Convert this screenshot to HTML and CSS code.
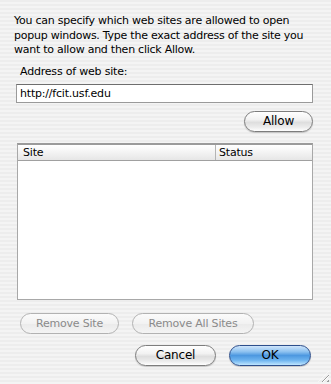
FILE: index.html
```html
<!DOCTYPE html>
<html lang="en">
<head>
    <meta charset="UTF-8">
    <title>Popup Windows</title>
    <link rel="stylesheet" href="styles.css">
</head>
<body>
    <div class="dialog">
        <p class="intro">You can specify which web sites are allowed to open popup windows. Type the exact address of the site you want to allow and then click Allow.</p>

        <label class="field-label" for="address">Address of web site:</label>
        <input class="address" type="text" id="address" value="http://fcit.usf.edu">

        <div class="row row-end">
            <button class="aqua allow">Allow</button>
        </div>

        <div class="site-list">
            <div class="list-head">
                <div class="col col-site">Site</div>
                <div class="col col-status">Status</div>
            </div>
            <div class="list-body"></div>
        </div>

        <div class="row remove-row">
            <button class="aqua disabled remove-site">Remove Site</button>
            <button class="aqua disabled remove-all">Remove All Sites</button>
        </div>

        <div class="row row-end confirm-row">
            <button class="aqua cancel">Cancel</button>
            <button class="aqua default ok">OK</button>
        </div>
    </div>
    <div class="grip"></div>
</body>
</html>
```

FILE: styles.css
```css
html, body {
    margin: 0;
    height: 100%;
}
body {
    width: 331px;
    height: 384px;
    overflow: hidden;
    position: relative;
    font-family: 'DejaVu Sans', 'Open Sans', sans-serif;
    font-size: 11px;
    color: #000;
    background: repeating-linear-gradient(180deg, #ededed 0px, #ededed 2px, #f4f4f4 2px, #f4f4f4 4px);
}
.dialog {
    display: flex;
    flex-direction: column;
    padding: 14px 18px 0 14px;
}
.intro {
    margin: 0;
    line-height: 14.5px;
    letter-spacing: -0.25px;
    width: 305px;
}
.field-label {
    margin: 7px 0 0 6px;
    line-height: 14px;
    letter-spacing: -0.2px;
}
.address {
    margin: 5px 0 0 2px;
    width: 297px;
    height: 19px;
    box-sizing: border-box;
    border: 1px solid #9a9a9a;
    border-top-color: #6e6e6e;
    background: #fff;
    padding: 1px 3px 0;
    font-family: inherit;
    font-size: 11px;
    letter-spacing: -0.2px;
    outline: none;
}
.row {
    display: flex;
}
.row-end {
    justify-content: flex-end;
}
.aqua {
    height: 21px;
    box-sizing: border-box;
    border-radius: 11px;
    border: 1px solid #7d7d7d;
    background: linear-gradient(180deg, #ffffff 0%, #f2f2f2 40%, #dedede 55%, #ececec 80%, #ffffff 100%);
    box-shadow: 0 1px 1px rgba(0,0,0,0.18);
    font-family: inherit;
    font-size: 12px;
    letter-spacing: -0.2px;
    color: #000;
    padding: 0;
}
.allow {
    margin-top: 8px;
    width: 69px;
}
.site-list {
    margin: 11px 0 0 3px;
    width: 296px;
    height: 157px;
    box-sizing: border-box;
    border: 1px solid #a8a8a8;
    border-top: 2px solid #9a9a9a;
    background: #fff;
    display: flex;
    flex-direction: column;
}
.list-head {
    display: flex;
    height: 15px;
    border-bottom: 1px solid #a0a0a0;
    background: linear-gradient(180deg, #ffffff 0%, #f3f3f3 50%, #e6e6e6 100%);
    line-height: 15px;
    letter-spacing: -0.2px;
}
.col {
    padding-left: 5px;
}
.col-site {
    width: 192px;
    border-right: 1px solid #b4b4b4;
}
.col-status {
    flex: 1;
    padding-left: 3px;
}
.list-body {
    flex: 1;
}
.remove-row {
    margin: 13px 0 0 6px;
    gap: 13px;
}
.disabled {
    color: #8a8a8a;
    border-color: #b2b2b2;
    box-shadow: none;
    background: linear-gradient(180deg, #fbfbfb 0%, #f2f2f2 50%, #ebebeb 55%, #f4f4f4 100%);
    font-size: 11px;
}
.remove-site {
    width: 99px;
}
.remove-all {
    width: 122px;
}
.confirm-row {
    margin-top: 11px;
    gap: 13px;
    padding-right: 2px;
}
.cancel {
    width: 81px;
}
.ok {
    width: 82px;
}
.default {
    border-color: #2e4f8c;
    background: linear-gradient(180deg, #cfe5fb 0%, #8ec2f0 30%, #4d98e0 50%, #6eb4ef 75%, #bfe6ff 100%);
}
.grip {
    position: absolute;
    right: 2px;
    bottom: 2px;
    width: 11px;
    height: 11px;
    background: repeating-linear-gradient(135deg, transparent 0px, transparent 2px, #9c9c9c 2px, #9c9c9c 3px, #ffffff 3px, #ffffff 4px);
    clip-path: polygon(100% 0, 100% 100%, 0 100%);
}
```
